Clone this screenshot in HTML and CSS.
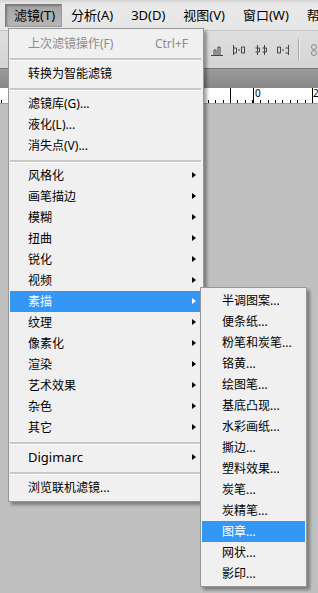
FILE: index.html
```html
<!DOCTYPE html>
<html lang="zh-CN">
<head>
    <meta charset="UTF-8">
    <meta name="viewport" content="width=device-width, initial-scale=1.0">
    <title>滤镜</title>
    <link rel="stylesheet" href="styles.css">
</head>
<body>
    <div class="app">
        <!-- 菜单栏 -->
        <div class="menubar">
            <span class="top-item active">滤镜(T)</span>
            <span class="top-item">分析(A)</span>
            <span class="top-item">3D(D)</span>
            <span class="top-item">视图(V)</span>
            <span class="top-item">窗口(W)</span>
            <span class="top-item">帮助(H)</span>
        </div>

        <!-- 选项栏 -->
        <div class="options">
            <svg class="opt-icon" viewBox="0 0 14 14"><path d="M1 12.5h12M4 12V7h2v5M8 12V4h2v8" fill="none" stroke="#444"/></svg>
            <svg class="opt-icon" viewBox="0 0 14 14"><path d="M1.5 2v10M1.5 5h3v5h-3M6 7h2M9.5 4h3v6h-3z" fill="none" stroke="#444"/></svg>
            <svg class="opt-icon" viewBox="0 0 14 14"><path d="M3.5 2v10M1.5 5h4v4h-4M10.5 2v10M8.5 5h4v4h-4" fill="none" stroke="#444"/></svg>
            <svg class="opt-icon" viewBox="0 0 14 14"><path d="M12.5 2v10M9.5 5h3v5h-3M6 7h2M1.5 4h3v6h-3z" fill="none" stroke="#444"/></svg>
            <span class="opt-sep"></span>
            <svg class="opt-icon faded" viewBox="0 0 14 14"><circle cx="6" cy="4" r="2.5" fill="none" stroke="#888"/><circle cx="6" cy="10" r="2.5" fill="none" stroke="#888"/></svg>
        </div>

        <!-- 文档标签 -->
        <div class="tabs"></div>

        <!-- 标尺 -->
        <div class="ruler">
            <span class="ruler-num n0">0</span>
            <span class="ruler-num n2">2</span>
        </div>

        <div class="workspace"></div>

        <!-- 滤镜菜单 -->
        <div class="menu main-menu">
            <div class="item disabled"><span>上次滤镜操作(F)</span><span class="key">Ctrl+F</span></div>
            <div class="sep"></div>
            <div class="item">转换为智能滤镜</div>
            <div class="sep"></div>
            <div class="item">滤镜库(G)...</div>
            <div class="item">液化(L)...</div>
            <div class="item">消失点(V)...</div>
            <div class="sep"></div>
            <div class="item sub">风格化</div>
            <div class="item sub">画笔描边</div>
            <div class="item sub">模糊</div>
            <div class="item sub">扭曲</div>
            <div class="item sub">锐化</div>
            <div class="item sub">视频</div>
            <div class="item sub hover">素描</div>
            <div class="item sub">纹理</div>
            <div class="item sub">像素化</div>
            <div class="item sub">渲染</div>
            <div class="item sub">艺术效果</div>
            <div class="item sub">杂色</div>
            <div class="item sub">其它</div>
            <div class="sep"></div>
            <div class="item sub latin">Digimarc</div>
            <div class="sep"></div>
            <div class="item">浏览联机滤镜...</div>
        </div>

        <!-- 素描子菜单 -->
        <div class="menu sub-menu">
            <div class="item">半调图案...</div>
            <div class="item">便条纸...</div>
            <div class="item">粉笔和炭笔...</div>
            <div class="item">铬黄...</div>
            <div class="item">绘图笔...</div>
            <div class="item">基底凸现...</div>
            <div class="item">水彩画纸...</div>
            <div class="item">撕边...</div>
            <div class="item">塑料效果...</div>
            <div class="item">炭笔...</div>
            <div class="item">炭精笔...</div>
            <div class="item hover">图章...</div>
            <div class="item">网状...</div>
            <div class="item">影印...</div>
        </div>
    </div>
</body>
</html>
```

FILE: styles.css
```css
*{
    box-sizing: border-box;
}
body{
    margin: 0;
    background-color: #c0c0c0;
    font-family: "Noto Sans", "Noto Sans CJK SC", sans-serif;
    font-size: 12px;
    color: #000;
}
.app{
    position: relative;
    width: 318px;
    height: 593px;
    overflow: hidden;
    display: flex;
    flex-direction: column;
}
.menubar{
    height: 30px;
    display: flex;
    align-items: center;
    padding: 0 0 0 5px;
    background: linear-gradient(#d2d2d2 0, #e9e9e9 4px, #e6e6e6);
    white-space: nowrap;
}
.top-item{
    height: 23px;
    line-height: 21px;
    padding: 0 8px;
    border: 1px solid transparent;
    font-size: 13px;
}
.top-item:first-child{
    padding-right: 6px;
}
.top-item.active{
    background: linear-gradient(#a4a4a4, #b6b6b6);
    border-color: #7c7c7c #9c9c9c #9c9c9c #7c7c7c;
    box-shadow: inset 1px 1px 2px rgba(0,0,0,.3);
}
.options{
    height: 38px;
    display: flex;
    align-items: center;
    padding-left: 210px;
    gap: 8px;
    background: linear-gradient(#dedede, #d4d4d4);
    border-top: 1px solid #c6c6c6;
}
.opt-icon{
    width: 14px;
    height: 14px;
    flex: none;
}
.opt-sep{
    width: 2px;
    height: 22px;
    background-color: #a9a9a9;
    border-right: 1px solid #eee;
    flex: none;
}
.tabs{
    height: 20px;
    background: linear-gradient(#9a9a9a, #878787);
    border-top: 1px solid #777;
}
.ruler{
    position: relative;
    height: 16px;
    background-color: #fff;
    background-image:
        repeating-linear-gradient(to right, #000 0 1px, transparent 1px 59px),
        repeating-linear-gradient(to right, #000 0 1px, transparent 1px 7.375px);
    background-size: 100% 16px, 100% 4px;
    background-position: 253px 0, 253px 12px;
    background-repeat: repeat-x;
    border-bottom: 1px solid #a0a0a0;
}
.ruler-num{
    position: absolute;
    top: 0;
    font-size: 10px;
    line-height: 11px;
}
.n0{ left: 255px; }
.n2{ left: 313px; }
.workspace{
    flex: 1;
    background-color: #c0c0c0;
}
.menu{
    position: absolute;
    background-color: #f0f0f0;
    border: 1px solid #979797;
    box-shadow: 3px 3px 3px rgba(0,0,0,.35);
    white-space: nowrap;
}
.main-menu{
    left: 8px;
    top: 28px;
    width: 196px;
    padding: 4px 2px 3px 1px;
}
.sub-menu{
    left: 200px;
    top: 287px;
    width: 107px;
    padding: 2px 1px;
}
.item{
    height: 21px;
    line-height: 21px;
    padding-left: 18px;
    display: flex;
    justify-content: space-between;
    position: relative;
}
.sub-menu .item{
    padding-left: 20px;
}
.item.disabled{
    color: #8d8d8d;
    padding-right: 13px;
}
.item.latin{
    font-size: 13px;
}
.item.hover{
    background-color: #3497f6;
    color: #fff;
}
.item.sub::after{
    content: "";
    position: absolute;
    right: 5px;
    top: 7px;
    border-left: 4px solid #000;
    border-top: 3.5px solid transparent;
    border-bottom: 3.5px solid transparent;
}
.item.sub.hover::after{
    border-left-color: #fff;
}
.sep{
    height: 9px;
    padding-top: 4px;
}
.sep::before{
    content: "";
    display: block;
    background-color: #c8c8c8;
    border-bottom: 1px solid #fcfcfc;
    height: 2px;
}
```
